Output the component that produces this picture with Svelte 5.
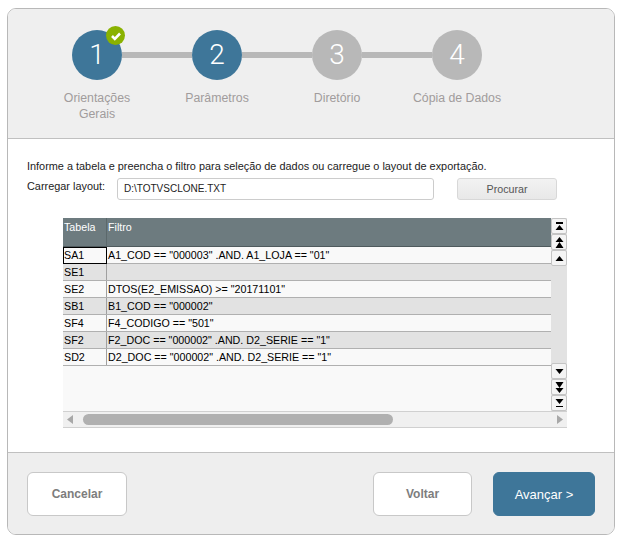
<script lang="ts">
    type Step = { num: number; label: string; active: boolean; done?: boolean };

    const steps: Step[] = [
        { num: 1, label: "Orientações Gerais", active: true, done: true },
        { num: 2, label: "Parâmetros", active: true },
        { num: 3, label: "Diretório", active: false },
        { num: 4, label: "Cópia de Dados", active: false },
    ];

    const rows = [
        ["SA1", 'A1_COD == "000003" .AND. A1_LOJA == "01"'],
        ["SE1", ""],
        ["SE2", 'DTOS(E2_EMISSAO) >= "20171101"'],
        ["SB1", 'B1_COD == "000002"'],
        ["SF4", 'F4_CODIGO == "501"'],
        ["SF2", 'F2_DOC == "000002" .AND. D2_SERIE == "1"'],
        ["SD2", 'D2_DOC == "000002" .AND. D2_SERIE == "1"'],
    ];
</script>

<div class="wizard">
    <header class="steps">
        {#each steps as step, i}
            <div class="step">
                {#if i > 0}<span class="line"></span>{/if}
                <div class="circle" class:active={step.active}>
                    {step.num}
                    {#if step.done}
                        <span class="badge">
                            <svg width="12" height="10" viewBox="0 0 12 10">
                                <path d="M2 5 L4.8 7.800 L10 2.500" fill="none" stroke="#fff" stroke-width="2.6" />
                            </svg>
                        </span>
                    {/if}
                </div>
                <div class="label">{step.label}</div>
            </div>
        {/each}
    </header>

    <main class="body">
        <p class="intro">Informe a tabela e preencha o filtro para seleção de dados ou carregue o layout de exportação.</p>
        <div class="layout-row">
            <span class="layout-label">Carregar layout:</span>
            <div class="input">D:\TOTVSCLONE.TXT</div>
            <button class="browse">Procurar</button>
        </div>

        <div class="browse-grid">
            <div class="grid-top">
                <div class="grid">
                    <div class="head">
                        <div class="c1">Tabela</div>
                        <div class="c2">Filtro</div>
                    </div>
                    {#each rows as row, i}
                        <div class="row" class:odd={i % 2 === 1}>
                            <div class="c1" class:focus={i === 0}>{row[0]}</div>
                            <div class="c2">{row[1]}</div>
                        </div>
                    {/each}
                </div>
                <div class="vbar">
                    <div class="vgroup">
                        <span class="sbtn">
                            <svg width="9" height="8" viewBox="0 0 9 8"><path d="M1 0h7v2H1z M4.500 3 L8.500 8 H0.500z" fill="#000" /></svg>
                        </span>
                        <span class="sbtn">
                            <svg width="9" height="11" viewBox="0 0 9 11"><path d="M4.500 0 L8.500 5 H0.500z M4.500 5 L8.500 11 H0.500z" fill="#000" /></svg>
                        </span>
                        <span class="sbtn">
                            <svg width="9" height="5" viewBox="0 0 9 5"><path d="M4.500 0 L8.500 5 H0.500z" fill="#000" /></svg>
                        </span>
                    </div>
                    <div class="vgroup">
                        <span class="sbtn">
                            <svg width="9" height="5" viewBox="0 0 9 5"><path d="M0.500 0 H8.500 L4.500 5z" fill="#000" /></svg>
                        </span>
                        <span class="sbtn">
                            <svg width="9" height="11" viewBox="0 0 9 11"><path d="M0.500 0 H8.500 L4.500 6z M0.500 6 H8.500 L4.500 11z" fill="#000" /></svg>
                        </span>
                        <span class="sbtn">
                            <svg width="9" height="8" viewBox="0 0 9 8"><path d="M0.500 0 H8.500 L4.500 5z M1 7h7v1H1z" fill="#000" /></svg>
                        </span>
                    </div>
                </div>
            </div>
            <div class="hbar">
                <svg width="6" height="9" viewBox="0 0 6 9"><path d="M6 0 V9 L0 4.500z" fill="#a8a8a8" /></svg>
                <span class="thumb"></span>
                <svg width="6" height="9" viewBox="0 0 6 9"><path d="M0 0 V9 L6 4.500z" fill="#a8a8a8" /></svg>
            </div>
        </div>
    </main>

    <footer class="actions">
        <button class="btn">Cancelar</button>
        <div class="spacer"></div>
        <button class="btn back">Voltar</button>
        <button class="btn primary">Avançar &gt;</button>
    </footer>
</div>

<style>
    :global(body) {
        margin: 0;
        background: #fff;
    }

    .wizard {
        box-sizing: border-box;
        width: 608px;
        height: 527px;
        margin: 8px 0 0 7px;
        border: 1px solid #b8b8b8;
        border-radius: 9px;
        overflow: hidden;
        display: flex;
        flex-direction: column;
        font-family: "Liberation Sans", Arial, sans-serif;
        background: #fff;
    }

    .steps {
        box-sizing: border-box;
        height: 130px;
        flex: none;
        display: flex;
        padding: 21px 0 0 29px;
        background: #efefef;
        border-bottom: 1px solid #c0c0c0;
    }

    .step {
        position: relative;
        width: 120px;
        display: flex;
        flex-direction: column;
        align-items: center;
    }

    .line {
        position: absolute;
        left: -35px;
        top: 22px;
        width: 70px;
        height: 6px;
        background: #b8b8b8;
    }

    .circle {
        position: relative;
        width: 50px;
        height: 50px;
        border-radius: 50%;
        background: #b8b8b8;
        color: #fff;
        font-family: Roboto, "Liberation Sans", sans-serif;
        font-weight: 300;
        font-size: 28px;
        line-height: 50px;
        text-align: center;
    }

    .circle.active {
        background: #3e7699;
    }

    .badge {
        position: absolute;
        left: 34px;
        top: -4px;
        width: 19px;
        height: 19px;
        border-radius: 50%;
        background: #8ab200;
        display: flex;
        align-items: center;
        justify-content: center;
    }

    .label {
        margin-top: 10px;
        width: 90px;
        color: #a19c9c;
        font-size: 12.300px;
        line-height: 16px;
        text-align: center;
    }

    .step:nth-child(4) .label {
        width: 110px;
    }

    .body {
        flex: 1;
        box-sizing: border-box;
        padding: 20px 0 0 19px;
        background: #fff;
    }

    .intro {
        margin: 0;
        color: #222;
        font-size: 10.900px;
        line-height: 14px;
    }

    .layout-row {
        display: flex;
        align-items: flex-start;
        margin-top: 5px;
    }

    .layout-label {
        width: 90px;
        padding-top: 1px;
        color: #222;
        font-size: 10.900px;
        line-height: 14px;
    }

    .input {
        box-sizing: border-box;
        width: 317px;
        height: 22px;
        padding-left: 6px;
        border: 1px solid #ccc;
        border-radius: 3px;
        color: #222;
        font-size: 10px;
        line-height: 20px;
    }

    .browse {
        box-sizing: border-box;
        width: 100px;
        height: 22px;
        margin-left: 23px;
        border: 1px solid #d8d8d8;
        border-radius: 3px;
        background: linear-gradient(#f2f2f2, #e8e8e8);
        color: #555;
        font-family: inherit;
        font-size: 10.700px;
        padding: 0;
    }

    .browse-grid {
        width: 504px;
        margin: 18px 0 0 36px;
    }

    .grid-top {
        display: flex;
        height: 193px;
    }

    .grid {
        width: 488px;
        background: #f9f9f9;
        font-size: 10.700px;
        color: #000;
    }

    .head {
        box-sizing: border-box;
        display: flex;
        height: 29px;
        background: #6d7b7f;
        color: #fff;
        border-bottom: 1px solid #4f5a5d;
        line-height: 18px;
    }

    .head .c1 {
        border-right: 1px solid #5b686b;
    }

    .c1 {
        box-sizing: border-box;
        width: 44px;
        padding-left: 1px;
        flex: none;
    }

    .c2 {
        padding-left: 1px;
    }

    .row {
        box-sizing: border-box;
        display: flex;
        height: 17px;
        line-height: 16px;
        background: #f9f9f9;
        border-bottom: 1px solid #b0b0b0;
    }

    .row.odd {
        background: #e2e2e2;
    }

    .row .c1 {
        border-right: 1px solid #a0a0a0;
    }

    .row .c1.focus {
        border: 1px solid #000;
        height: 17px;
        line-height: 15px;
        padding-left: 0;
    }

    .vbar {
        width: 16px;
        background: #e2e2e2;
        display: flex;
        flex-direction: column;
        justify-content: space-between;
    }

    .vgroup {
        display: flex;
        flex-direction: column;
    }

    .sbtn {
        box-sizing: border-box;
        width: 16px;
        height: 16px;
        border: 1px solid #c4c4c4;
        border-radius: 2px;
        background: #f4f4f4;
        display: flex;
        align-items: center;
        justify-content: center;
    }

    .hbar {
        box-sizing: border-box;
        height: 17px;
        background: #f0f0f0;
        border-top: 1px solid #d0d0d0;
        border-bottom: 1px solid #d0d0d0;
        display: flex;
        align-items: center;
        padding: 0 4px;
    }

    .thumb {
        width: 310px;
        height: 11px;
        margin: 0 auto 0 10px;
        border-radius: 6px;
        background: #b0b0b0;
    }

    .actions {
        box-sizing: border-box;
        height: 82px;
        flex: none;
        display: flex;
        align-items: flex-start;
        padding: 19px 19px 0 19px;
        background: #eeeeee;
        border-top: 1px solid #c0c0c0;
    }

    .spacer {
        flex: 1;
    }

    .btn {
        box-sizing: border-box;
        width: 100px;
        height: 44px;
        border: 1px solid #c8c8c8;
        border-radius: 6px;
        background: #fff;
        color: #7d7d7d;
        font-family: inherit;
        font-size: 12px;
        font-weight: bold;
        padding: 0;
    }

    .back {
        width: 99px;
    }

    .primary {
        width: 102px;
        margin-left: 21px;
        background: #3e7699;
        border-color: #3e7699;
        color: #fff;
        font-size: 13px;
        font-weight: normal;
    }
</style>
